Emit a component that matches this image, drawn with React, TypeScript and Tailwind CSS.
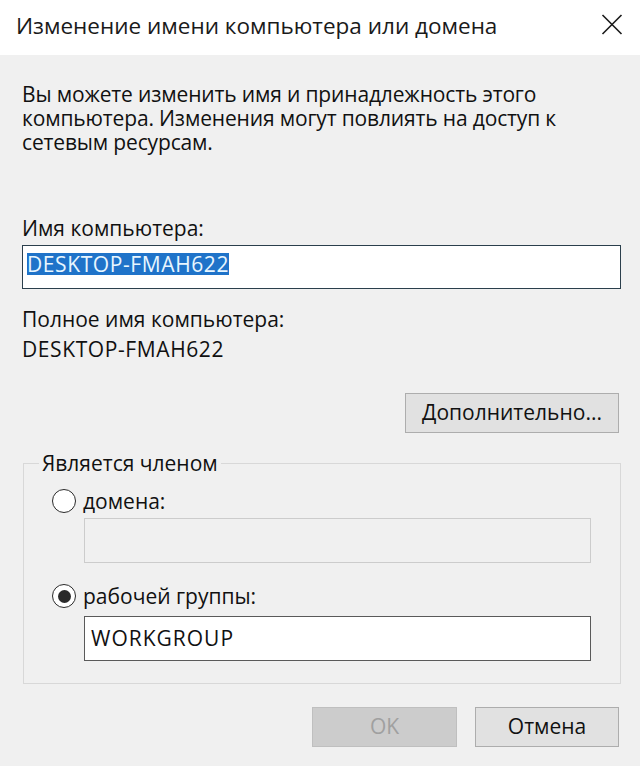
import React from 'react';

const font = { fontFamily: '"Open Sans", "Noto Sans", sans-serif' };

function CloseIcon() {
  return (
    <svg width="22" height="21" viewBox="0 0 22 21" className="block">
      <path d="M1.5 1 L20.5 20 M20.5 1 L1.5 20" stroke="#1a1a1a" strokeWidth="1.6" fill="none" />
    </svg>
  );
}

function Radio({ checked }: { checked?: boolean }) {
  return (
    <span className="flex h-[24px] w-[24px] shrink-0 items-center justify-center rounded-full border-[1.5px] border-[#2a2a2a] bg-white">
      {checked && <span className="h-[13px] w-[13px] rounded-full bg-[#2a2a2a]" />}
    </span>
  );
}

export default function App() {
  return (
    <div className="flex h-[766px] w-[640px] flex-col bg-[#f0f0f0] text-[21px] text-[#111]" style={font}>
      {/* title bar */}
      <div className="flex h-[55px] shrink-0 items-center justify-between bg-white pb-[4px] pl-[16px] pr-[17px]">
        <span className="text-[22.5px] leading-[30px] text-[#1a1a1a]">Изменение имени компьютера или домена</span>
        <span className="mb-[3px]">
          <CloseIcon />
        </span>
      </div>

      <div className="flex flex-col pl-[22px] pr-[19px]">
        <p className="mt-[27px] leading-[24px] tracking-[-0.15px]">
          Вы можете изменить имя и принадлежность этого
          <br />
          компьютера. Изменения могут повлиять на доступ к
          <br />
          сетевым ресурсам.
        </p>

        <div className="mt-[62px] leading-[24px]">Имя компьютера:</div>
        <div className="mt-[5px] flex h-[44px] items-start border border-[#2b3f4c] bg-white pl-[4px] pt-[7px]">
          <span className="bg-[#1f73c9] leading-[22px] tracking-[0.6px] text-[#e8f6ff]">DESKTOP-FMAH622</span>
        </div>

        <div className="mt-[18px] leading-[24px]">Полное имя компьютера:</div>
        <div className="mt-[6px] leading-[24px] tracking-[0.6px]">DESKTOP-FMAH622</div>

        <div className="mt-[32px] flex justify-end pr-[2px]">
          <div className="flex h-[40px] w-[214px] items-center justify-center border border-[#adadad] bg-[#e1e1e1]">
            Дополнительно...
          </div>
        </div>

        <fieldset className="ml-[1px] mt-[18px] border border-[#d8d8d8] pb-[22px]">
          <legend className="ml-[15px] px-[3px] leading-[24px]">Является членом</legend>
          <div className="flex flex-col pl-[28px]">
            <div className="mt-[14px] flex h-[24px] items-center gap-[7px] leading-[24px]">
              <Radio />
              <span>домена:</span>
            </div>
            <div className="ml-[32px] mt-[5px] h-[45px] w-[507px] border border-[#cccccc] bg-[#f0f0f0]" />
            <div className="mt-[21px] flex h-[24px] items-center gap-[7px] leading-[24px]">
              <Radio checked />
              <span>рабочей группы:</span>
            </div>
            <div className="ml-[32px] mt-[8px] flex h-[45px] w-[507px] items-center border border-[#5a5a5a] bg-white pl-[6px] tracking-[1px]">
              WORKGROUP
            </div>
          </div>
        </fieldset>

        <div className="mt-[23px] flex justify-end gap-[18px] pr-[2px]">
          <div className="flex h-[40px] w-[145px] items-center justify-center border border-[#bfbfbf] bg-[#cccccc] text-[#a0a0a0]">
            OK
          </div>
          <div className="flex h-[40px] w-[144px] items-center justify-center border border-[#adadad] bg-[#e1e1e1]">
            Отмена
          </div>
        </div>
      </div>
    </div>
  );
}
